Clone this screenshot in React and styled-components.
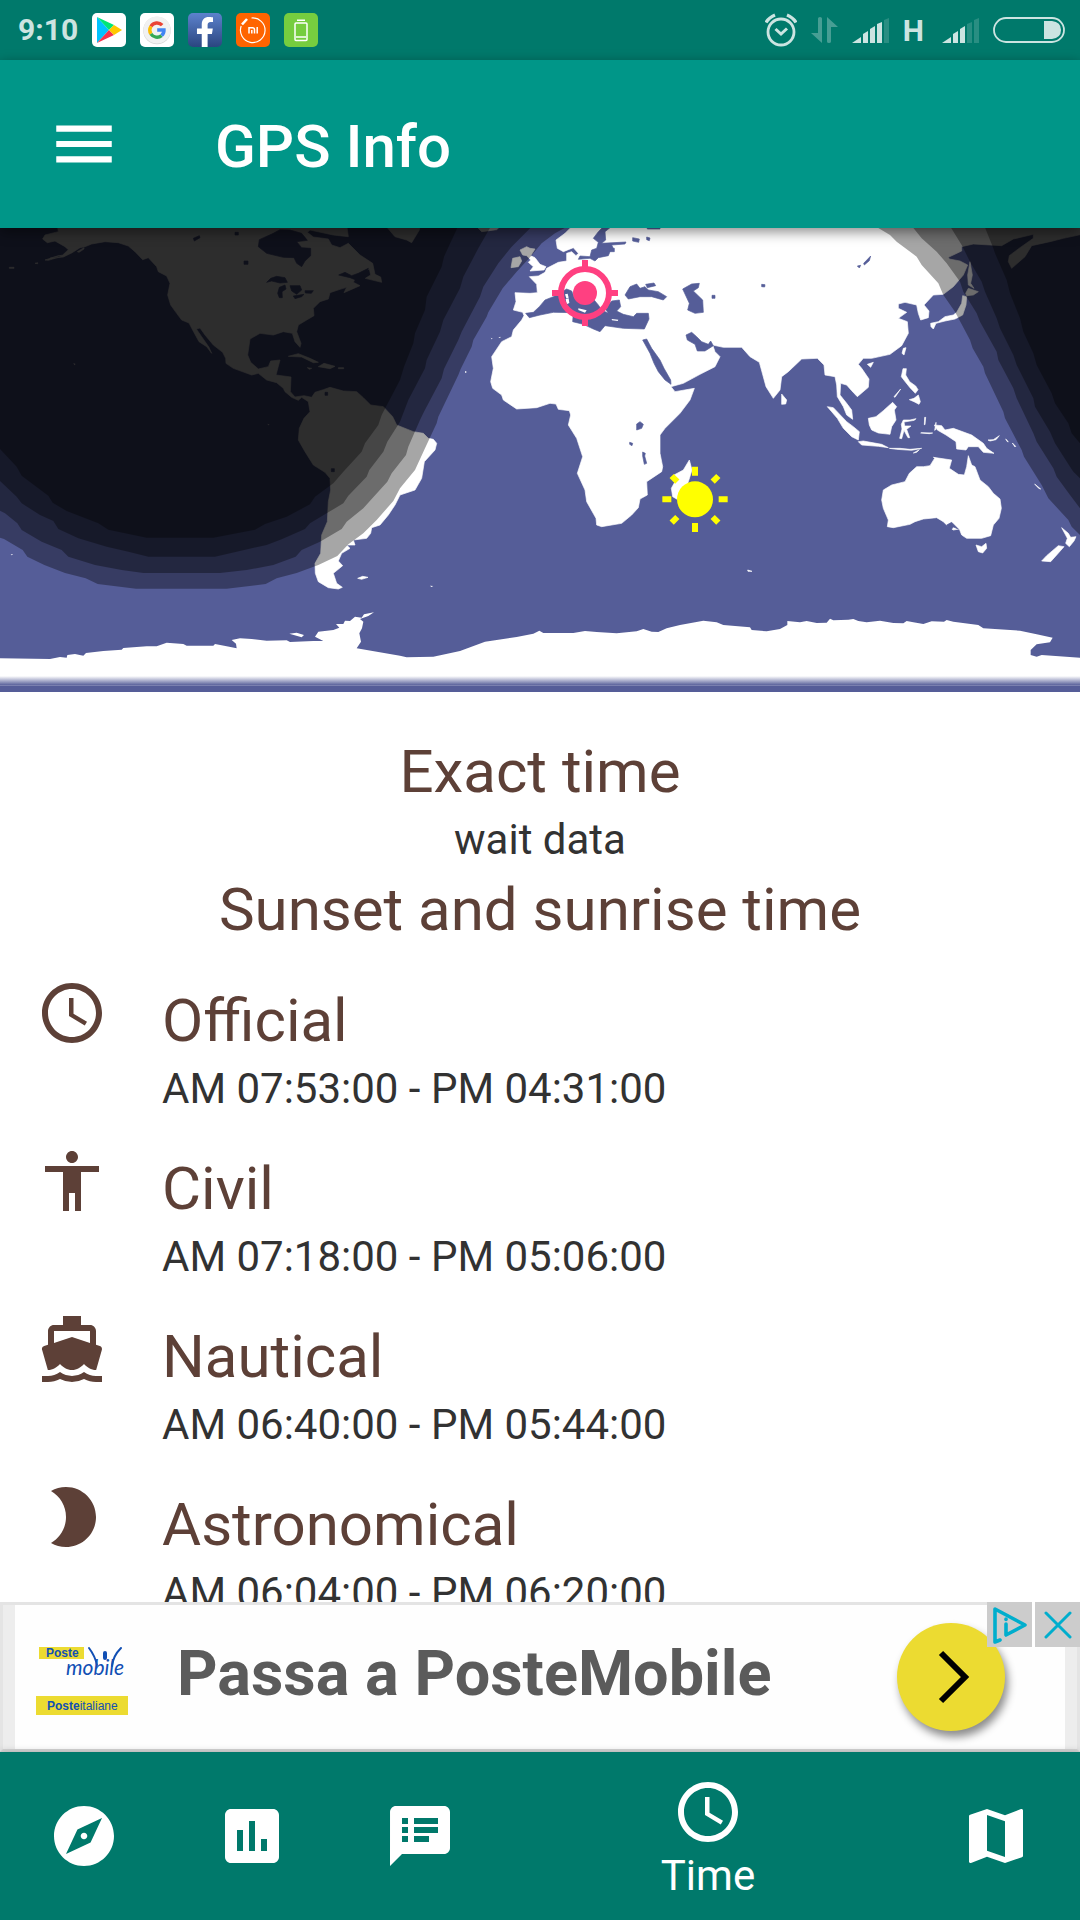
import React from "react";
import styled, { createGlobalStyle } from "styled-components";
import {
  MdMenu,
  MdAccessTime,
  MdAccessibility,
  MdDirectionsBoat,
  MdBrightness2,
  MdExplore,
  MdInsertChart,
  MdSpeakerNotes,
  MdMap,
} from "react-icons/md";
import { FaFacebookF } from "react-icons/fa";

const color = {
  primary: "#009688",
  primaryDark: "#00796b",
  heading: "#5d4037",
  text: "#323232",
  ocean: "#555d98",
  status: "#cce4e1",
  accent: "#ff4081",
  poste: "#ecdb31",
  posteBlue: "#114fb4",
};

const GlobalStyle = createGlobalStyle`
  *, *::before, *::after { box-sizing: border-box; }
  body {
    margin: 0;
    font-family: Roboto, "Noto Sans", sans-serif;
    background: #fff;
  }
  h1, h2, h3, p, ul { margin: 0; padding: 0; }
  ul { list-style: none; }
  button { border: 0; padding: 0; background: none; font: inherit; cursor: pointer; }
  svg { display: block; }
`;

const Screen = styled.div`
  display: flex;
  flex-direction: column;
  height: 100vh;
`;

/* ---------- status bar ---------- */

const StatusBar = styled.div`
  display: flex;
  align-items: center;
  justify-content: space-between;
  flex: none;
  height: 60px;
  padding: 0 15px 0 18px;
  background: ${color.primaryDark};
  color: ${color.status};
`;

const StatusGroup = styled.div`
  display: flex;
  align-items: center;
  gap: ${(p) => p.$gap}px;
`;

const StatusText = styled.span`
  font-size: 30px;
  line-height: 36px;
  font-weight: 700;
`;

const Network = styled(StatusText)`
  margin: 2px 4px 0 0;
`;

const AppBadge = styled.span`
  display: flex;
  align-items: center;
  justify-content: center;
  width: 34px;
  height: 34px;
  border-radius: 5px;
  overflow: hidden;
  background: ${(p) => p.$bg};
  color: #fff;
`;

const FacebookBadge = styled(AppBadge)`
  align-items: flex-end;
  justify-content: flex-end;
  padding-right: 2px;
`;

const PlayLogo = () => (
  <svg width="34" height="34" viewBox="0 0 34 34">
    <path d="M5 4v26L17 17z" fill="#00c3ff" />
    <path d="M5 4 22 12 17 17z" fill="#00e676" />
    <path d="M5 30 22 22 17 17z" fill="#f5334b" />
    <path d="M22 12 30 17 22 22 17 17z" fill="#ffc800" />
  </svg>
);

const GoogleLogo = () => (
  <svg width="34" height="34" viewBox="0 0 34 34" fill="none" strokeWidth="3.400">
    <circle cx="17" cy="17.500" r="13.800" fill="#d5d5d5" />
    <circle cx="17" cy="17" r="13.600" fill="#f1f1f1" />
    <path d="M22.200 12.200A7.200 7.200 0 0 0 10.900 13.300" stroke="#ea4335" />
    <path d="M10.900 13.300A7.200 7.200 0 0 0 10.900 20.900" stroke="#fbbc05" />
    <path d="M10.900 20.900A7.200 7.200 0 0 0 21.600 22.600" stroke="#34a853" />
    <path d="M21.600 22.600A7.200 7.200 0 0 0 24 17H17.200" stroke="#4285f4" />
  </svg>
);

const MiLogo = () => (
  <svg width="34" height="34" viewBox="0 0 34 34" fill="none" stroke="#fff">
    <path d="M15.500 5a12.300 12.300 0 1 1-10.300 8" strokeWidth="1.200" />
    <path d="M6 11.500 11 6" strokeWidth="2.600" />
    <path d="M13 20.500v-5.700h3.500q2 0 2 2v3.700M15.800 20.500v-3.500M21.200 14v6.500" strokeWidth="1.500" />
  </svg>
);

const BatteryAppLogo = () => (
  <svg width="34" height="34" viewBox="0 0 34 34" fill="none" stroke="#fff" strokeWidth="1.500">
    <rect x="11" y="10" width="12" height="17.500" rx="1" />
    <path d="M13 7.200h8M12 24h10" />
  </svg>
);

const AlarmIcon = () => (
  <svg width="32" height="34" viewBox="0 0 32 34" fill="none" stroke="currentColor" strokeWidth="2.800">
    <circle cx="16" cy="19" r="13" />
    <path d="M10.500 16l5.500 5 6-5.500" strokeWidth="3" />
    <path d="M1 9.500Q4 4.500 10 2M31 9.500Q28 4.500 22 2" strokeWidth="3.400" />
  </svg>
);

const DataIcon = () => (
  <svg width="27" height="26" viewBox="0 0 27 26" fill="currentColor" opacity="0.35">
    <path d="M7 1.500Q7 0 9 0t2 1.500V26L0 16h7zM16 0 27 10h-7v14.500q0 1.500-2 1.500t-2-1.500z" />
  </svg>
);

const signalShapes = [
  "0,25 9,19 9,25",
  "11,16 16,13 16,25 11,25",
  "18,11 23,8 23,25 18,25",
  "25,6 30,4 30,25 25,25",
  "32,2 37,0 37,25 32,25",
];

const SignalIcon = ({ level }) => (
  <svg width="37" height="25" viewBox="0 0 37 25" fill="currentColor">
    {signalShapes.map((points, i) => (
      <polygon key={points} points={points} opacity={i < level ? 1 : 0.2} />
    ))}
  </svg>
);

const BatteryIcon = () => (
  <svg width="72" height="26" viewBox="0 0 72 26">
    <rect x="1" y="1" width="70" height="24" rx="12" fill="none" stroke="currentColor" strokeWidth="1.800" />
    <path d="M51 4h8q9 1 9 9t-9 9h-8z" fill="currentColor" />
  </svg>
);

/* ---------- app bar ---------- */

const AppBar = styled.header`
  display: flex;
  align-items: center;
  flex: none;
  gap: 94px;
  height: 168px;
  padding: 0 47px;
  background: ${color.primary};
  color: #fff;
  z-index: 1;
  box-shadow: 0 4px 12px rgba(0, 0, 0, 0.45);
`;

const IconButton = styled.button`
  display: flex;
  color: inherit;
  font-size: 74px;
`;

const Title = styled.h1`
  padding-top: 5px;
  font-size: 60px;
  line-height: 72px;
  font-weight: 500;
`;

/* ---------- content ---------- */

const Content = styled.main`
  flex: 1;
  min-height: 0;
  overflow-y: auto;
  scrollbar-width: none;
`;

const MapFigure = styled.svg`
  width: 100%;
  height: auto;
`;

const Summary = styled.section`
  padding-top: 40px;
  text-align: center;
`;

const Heading = styled.h2`
  font-size: 60px;
  line-height: 80px;
  font-weight: 400;
  color: ${color.heading};
`;

const Value = styled.p`
  padding-bottom: 2px;
  font-size: 42px;
  line-height: 56px;
  color: ${color.text};
`;

const Twilights = styled.ul`
  display: flex;
  flex-direction: column;
  gap: 26px;
  padding: 27px 36px;
`;

const Twilight = styled.li`
  display: flex;
  align-items: flex-start;
  gap: 54px;
  color: ${color.heading};

  > svg {
    flex: none;
    font-size: 72px;
  }
`;

const TwilightBody = styled.div`
  padding-top: 4px;
`;

/* ---------- advert ---------- */

const Advert = styled.aside`
  position: relative;
  display: flex;
  align-items: center;
  flex: none;
  height: 150px;
  padding: 0 60px 0 21px;
  background: #fefefe;
  border: 3px solid #e4e4e4;
  border-bottom-color: #d5d5d5;
  box-shadow: inset 12px 0 #ededed, inset -12px 0 #ededed;
`;

const Brand = styled.svg`
  flex: none;
  margin-left: 12px;
`;

const AdLink = styled.a`
  flex: 1;
  padding: 0 0 6px 49px;
  font-size: 63px;
  line-height: 74px;
  font-weight: 700;
  color: #5b5b5b;
  text-decoration: none;
`;

const GoButton = styled.button`
  display: flex;
  align-items: center;
  justify-content: center;
  flex: none;
  width: 108px;
  height: 108px;
  margin-right: 12px;
  padding-left: 6px;
  border-radius: 50%;
  background: ${color.poste};
  box-shadow: 3px 6px 8px rgba(0, 0, 0, 0.45);
`;

const AdControls = styled.div`
  position: absolute;
  top: -3px;
  right: -3px;
  display: flex;
  gap: 3px;
  background: #fff;
`;

const AdControl = styled.button`
  display: flex;
  align-items: center;
  justify-content: center;
  width: 45px;
  height: 45px;
  background: #ccc;
  color: #00aecd;
`;

/* ---------- bottom navigation ---------- */

const BottomNav = styled.nav`
  display: flex;
  flex: none;
  height: 168px;
  background: ${color.primaryDark};
  z-index: 1;
  box-shadow: 0 0 8px rgba(0, 0, 0, 0.2);
`;

const NavItem = styled.button`
  display: flex;
  flex-direction: column;
  align-items: center;
  justify-content: ${(p) => (p.$active ? "flex-start" : "center")};
  gap: 2px;
  flex: ${(p) => (p.$active ? "1" : "0 0 168px")};
  padding-top: ${(p) => (p.$active ? 24 : 0)}px;
  color: #fff;
  font-size: 42px;
  line-height: 52px;

  > svg {
    font-size: 72px;
  }
`;

/* ---------- world map drawing ---------- */

/* Everything that lies in the western third of the map. */
const westLand = [
  // North and South America
  "M172 0 175 20 135 30 128 42 142 53 165 48 195 65 205 74 188 90 150 100 190 96 215 84 240 68 255 65 275 57 315 50 355 53 385 63 405 80 428 104 445 98 470 125 475 140 500 153 510 175 503 210 512 240 530 265 545 285 567 294 578 315 597 350 620 365 635 385 627 367 605 335 589 312 600 309 615 330 640 360 668 382 677 400 678 415 700 430 755 450 775 445 800 465 830 473 850 490 855 500 875 517 895 526 905 517 925 530 930 560 912 580 898 610 895 645 915 680 940 720 975 742 990 760 992 795 985 830 982 890 965 930 962 985 945 1015 946 1045 955 1070 985 1088 1015 1092 1027 1087 1010 1075 1000 1045 1028 1022 1015 1008 1025 985 1050 970 1040 960 1065 960 1060 945 1100 940 1112 925 1115 908 1140 900 1165 870 1185 840 1200 810 1245 795 1265 760 1273 710 1305 675 1310 655 1300 643 1285 640 1270 625 1240 620 1190 600 1178 575 1150 545 1112 540 1090 518 1070 500 1030 498 990 487 970 494 945 502 935 517 912 512 885 516 871 500 873 456 828 450 840 405 812 408 805 425 775 432 752 412 743 390 750 342 780 325 820 330 850 320 877 325 885 350 900 367 903 355 890 320 895 300 920 285 942 272 940 250 960 230 985 222 990 203 1020 193 1040 187 1032 203 1080 182 1060 172 1068 155 1108 132 1112 150 1096 160 1145 172 1142 156 1125 148 1118 115 1080 90 1045 55 1020 68 995 60 985 42 940 36 922 22 930 15 1000 30 1045 35 1040 0z",
  // Cuba, Hispaniola, Jamaica, Puerto Rico
  "M865 394 895 386 930 400 955 412 940 413 905 396z",
  "M955 425 972 415 1005 424 990 431z",
  "M922 428 935 430 928 433zM1015 428h16v3h-16z",
  // Greenland and Iceland
  "M1155 0 1185 35 1220 45 1235 53 1258 15 1260 0z",
  "M1425 0 1445 20 1490 14 1505 0z",
  // Falklands, South Georgia, Hawaii, Aleutians
  "M1073 1060 1088 1054 1104 1057 1085 1063z",
  "M28 127h14v3H28zM105 115l8-2v3zM135 105l40-13 10 2-40 12zM232 80l20-12v4l-15 10z",
];

const faintIslands = "M1290 1082l10 1-6 3zM220 414l7 3-4 4zM802 596l7 3-4 2zM32 987l8 2-5 2zM1395 439h4v4h-4zM1472 338l6 3-3 2zM1495 338l6-3v4z";

const westSea = [
  "M870 15 840 14 820 25 778 44 775 65 800 85 850 97 882 98 890 115 905 125 915 108 932 92 932 70 905 68 890 50 922 46 905 25z",
  "M800 172 812 160 830 154 855 158 862 172 840 174 815 168z",
  "M855 180 858 192 846 200 847 218 838 218 833 205 838 187z",
  "M870 182 900 182 905 195 890 208 875 198zM880 213 912 208 905 215 885 221zM915 197h25l-6 8-18-1z",
  "M580 40 598 32 600 38 583 48zM705 22h10v8h-10zM732 108h12v10h-12zM975 502h8v9h-8zM994 731h9v9h-9z",
  "M1016 150 1035 142 1055 152 1075 145 1105 130 1098 150 1068 165 1050 158z",
];

/* Europe, Africa and Asia; coordinates start at the mid-Atlantic. */
const eastLand = [
  "M820 0 795 25 768 45 772 70 790 80 820 68 835 85 828 92 815 80 800 85 800 108 775 112 740 130 735 142 715 153 688 155 710 178 712 203 690 205 645 203 648 230 640 255 668 262 672 272 665 285 640 315 635 335 605 350 575 395 580 430 572 470 578 490 605 510 610 525 650 552 710 548 750 535 768 537 775 553 808 557 812 570 805 600 830 640 848 695 832 745 855 795 860 830 888 880 890 900 905 905 965 895 995 870 1015 848 1020 822 1042 810 1040 770 1085 740 1088 725 1080 685 1080 630 1095 610 1140 565 1170 525 1183 490 1125 500 1113 485 1150 475 1200 448 1245 425 1260 395 1245 380 1238 360 1270 367 1325 367 1350 395 1378 412 1398 485 1420 520 1440 495 1445 455 1465 440 1505 402 1552 400 1572 420 1575 450 1605 455 1610 480 1612 515 1630 545 1640 570 1658 583 1655 555 1640 535 1620 510 1622 475 1640 480 1655 497 1672 515 1705 487 1707 462 1685 430 1675 418 1690 400 1715 400 1770 388 1805 362 1825 325 1822 290 1795 280 1820 262 1795 250 1795 237 1815 232 1850 240 1855 265 1862 285 1885 278 1887 258 1872 240 1900 210 1930 208 1960 185 1990 150 2003 120 1980 108 1948 102 1945 97 1985 78 1985 65 2020 57 2105 62 2140 42 2200 28 2200 40 2160 68 2128 92 2125 110 2135 130 2175 95 2195 62 2250 50 2290 40 2345 28 2345 0z",
  // Great Britain and Ireland
  "M660 75 680 65 690 70 705 72 692 92 705 98 720 118 738 125 732 135 690 138 700 125 685 112 692 105 680 92 668 90z",
  "M638 100 660 95 665 108 655 125 633 128z",
  // Madagascar
  "M1168 705 1176 735 1165 770 1150 815 1135 825 1118 815 1114 790 1125 770 1122 750 1150 735z",
  // Sri Lanka
  "M1445 507 1460 525 1457 537 1445 538z",
  // Sumatra, Java and the lesser Sunda islands
  "M1582 545 1600 548 1640 590 1660 605 1678 620 1675 645 1655 635 1630 610 1612 580 1595 560z",
  "M1675 650 1690 648 1745 658 1765 668 1735 664 1685 660z",
  "M1768 670 1800 670 1830 673 1865 670 1835 676 1790 673zM1840 684 1858 674 1850 682z",
  // Borneo
  "M1705 580 1728 575 1750 557 1778 532 1790 545 1783 555 1788 585 1775 605 1770 628 1735 624 1715 615 1708 600z",
  // Sulawesi
  "M1804 598 1810 585 1830 585 1848 581 1843 586 1812 591 1814 603 1833 603 1820 613 1829 638 1824 638 1812 616 1805 641 1799 640 1806 612z",
  // Moluccas
  "M1874 577h3l-2 22h-2zM1864 623l34 1-10 2-26-2zM1908 592l-4 24 3-2z",
  // Philippines
  "M1809 431 1819 431 1817 450 1829 470 1847 483 1854 494 1846 505 1830 488 1814 468 1804 455zM1842 520 1855 510 1861 530 1857 538 1842 530 1828 524zM1782 515l20-23-17 25z",
  // Taiwan and Hainan
  "M1818 368 1812 390 1806 385 1810 370zM1702 418 1720 412 1712 427z",
  // Japan and Sakhalin
  "M1892 295 1915 290 1935 275 1960 270 1970 262 1985 235 1988 212 2000 215 1998 240 1988 270 1965 282 1935 288 1908 295 1900 312 1893 305z",
  "M1997 205 2005 190 2035 200 2020 210 2000 212zM2010 110 2017 150 2012 175 2022 190 2005 180 2003 150z",
  // New Guinea and the islands east of it
  "M1903 600 1925 602 1935 615 1960 610 2015 630 2050 655 2060 670 2082 685 2050 682 2035 665 2005 665 1998 675 1970 672 1968 650 1938 630 1912 615z",
  "M2064 645 2080 644 2098 632 2088 644 2070 648zM2117 642l8 8-3 0zM2137 654l10 10-2 2zM2204 777l18 15-6-2z",
  // Australia and Tasmania
  "M2005 692 2015 720 2025 725 2040 765 2065 785 2080 805 2100 822 2104 850 2097 880 2080 900 2072 932 2045 940 2000 940 1985 930 1978 912 1960 915 1945 905 1930 890 1910 878 1870 882 1845 890 1830 898 1780 908 1762 905 1765 885 1750 850 1745 825 1750 795 1775 780 1815 770 1828 745 1850 725 1870 725 1890 722 1905 698 1900 697 1955 705 1948 730 1975 748 1993 750 2000 725z",
  "M2028 960 2045 965 2058 955 2060 970 2048 984 2035 980z",
  // New Zealand
  "M2285 908 2305 925 2312 937 2328 935 2322 948 2308 965 2297 955 2302 940z",
  "M2275 962 2292 965 2270 990 2252 1010 2225 1008 2240 992z",
  // Kerguelen
  "M1343 1035l13 4-12 0z",
];

const eastSea = [
  // Mediterranean with the Adriatic and Aegean
  "M677 265 700 262 718 245 735 225 760 215 778 205 800 192 815 198 822 215 845 235 858 240 850 222 835 200 845 195 880 222 895 240 905 255 925 265 915 250 935 228 958 225 962 245 950 258 970 268 1000 275 1010 265 1045 265 1047 282 1033 312 970 310 915 302 900 320 880 312 850 298 818 290 820 263 760 262 720 270 688 278z",
  // Black Sea and Azov
  "M975 210 990 185 1010 177 1020 190 1035 185 1045 195 1075 200 1100 215 1090 225 1055 215 1020 215 985 222zM1037 178l25-4 5 8-25 6z",
  // Caspian, Aral and Lake Balkhash
  "M1148 192 1175 177 1198 175 1195 188 1180 198 1208 225 1210 262 1185 265 1163 255 1168 235z",
  "M1236 211h9v9h-9zM1385 178l10 1-1 7-9-1z",
  // Baikal
  "M1712 93l-4 14-15 13-2-5zM1672 123l10-2-4 8z",
  // Baltic with the Gulf of Finland
  "M880 40 895 20 915 0 940 0 915 20 917 45 905 55 978 51 975 57 935 60 940 70 930 80 925 92 895 98 885 108 870 100 835 103 840 93 870 95 875 75 890 70 895 52z",
  "M928 70h15v10h-12zM998 38l20 4-2 10-18-4zM1040 36l10 3-2 8-8-3zM1040 0h40v12l-38 0z",
  // Red Sea
  "M1028 345 1040 342 1055 370 1080 405 1092 430 1112 465 1113 478 1095 465 1075 440 1062 415 1050 385z",
  // Persian Gulf
  "M1158 330 1175 322 1190 335 1205 350 1225 358 1232 348 1240 362 1215 378 1192 378 1185 358 1162 345z",
  // African lakes
  "M1010 597 1020 590 1030 598 1025 610 1010 615zM989 652l9 3-2 7-7-4zM1028 681l8 4-2 8 6 22-7 3-5-25z",
  // Spencer Gulf
  "M1940 900l15-8 20 20-15-6-10 12z",
];

const medIslands = "M795 208l8-2 3 12-7 2zM797 222l9-2 2 14-8 4zM835 250l25 6-5 7-20-8zM935 282l20 2-2 4-17-2z";

const antarctica =
  "M0 1300 150 1302 180 1296 200 1298 202 1290 225 1287 250 1292 258 1284 310 1278 365 1274 370 1269 440 1264 470 1264 500 1253 550 1257 560 1262 640 1262 645 1257 680 1264 710 1270 708 1256 695 1245 720 1240 755 1242 800 1247 860 1246 870 1251 940 1248 970 1248 945 1235 955 1220 1000 1215 1018 1208 1008 1197 1030 1197 1035 1187 1050 1188 1065 1175 1085 1178 1092 1168 1122 1162 1105 1173 1080 1182 1090 1190 1086 1210 1078 1225 1083 1250 1070 1270 1200 1292 1220 1297 1300 1295 1380 1278 1455 1250 1550 1236 1600 1226 1618 1217 1630 1224 1720 1224 1755 1218 1790 1221 1850 1225 1910 1219 1930 1212 1955 1220 1975 1221 2000 1210 2040 1200 2110 1187 2150 1192 2170 1200 2250 1207 2255 1215 2300 1219 2340 1212 2362 1200 2362 1188 2400 1192 2420 1188 2450 1194 2480 1193 2490 1181 2500 1186 2545 1184 2560 1182 2575 1188 2600 1192 2640 1187 2680 1194 2710 1195 2720 1188 2740 1192 2770 1197 2795 1189 2832 1190 2840 1185 2860 1190 2935 1200 2950 1210 3060 1217 3110 1228 3158 1238 3150 1252 3110 1258 3092 1275 3092 1290 3110 1295 3125 1290 3240 1298V1390H0z M868 1226 890 1223 912 1230 905 1237z";

/* Twilight limits: official, civil, nautical, astronomical. */
const nightWest = [
  "M0 0V938L12 942 68 975 82 995 133 1020 195 1044 257 1060 293 1077 408 1091H680L797 1077 830 1060 890 1044 955 1020 1012 993 1045 958 1090 925 1130 885 1180 828 1200 790 1245 735 1275 670 1310 595 1315 575 1375 450 1382 432 1415 365 1420 345 1460 275 1465 262 1508 190 1550 140 1590 97 1625 55 1665 25 1710 0z",
  "M0 0V857L15 865 52 895 65 915 125 950 185 975 205 995 285 1020 365 1035 430 1044H660L740 1035 820 1020 887 995 905 975 960 950 1025 912 1040 890 1090 850 1115 822 1162 770 1175 745 1218 690 1225 665 1260 585 1272 560 1325 460 1332 432 1375 345 1385 320 1440 215 1450 185 1495 115 1535 65 1600 0z",
  "M0 0V768L50 815 65 835 120 870 160 888 175 912 235 940 320 965 385 980 445 995H645L710 980 800 960 845 943 915 912 930 895 985 862 1030 835 1045 812 1100 755 1108 735 1150 680 1162 650 1200 590 1225 525 1275 430 1280 405 1320 320 1330 285 1380 190 1390 155 1435 70 1475 0z",
  "M0 0V672L50 725 65 752 145 812 158 833 200 858 295 895 325 914 440 938H640L765 914 795 897 860 875 930 838 945 815 1000 775 1030 740 1085 680 1095 655 1135 600 1145 570 1200 465 1212 425 1240 355 1245 325 1275 255 1280 215 1325 125 1332 95 1376 0z",
];

const nightEast = [
  "M2620 0 2670 30 2690 50 2750 95 2765 120 2815 175 2830 210 2865 260 2910 345 2918 370 2950 425 2955 445 3010 560 3015 580 3065 675 3072 695 3125 780 3145 820 3205 885 3215 905 3240 930V0z",
  "M2733 0 2765 40 2810 80 2840 115 2880 170 2890 200 2930 265 2940 290 2990 380 2995 405 3040 490 3050 520 3100 625 3110 650 3160 730 3170 755 3210 810 3240 850V0z",
  "M2848 0 2885 60 2910 110 2945 170 2955 200 2990 280 3000 310 3040 390 3050 420 3100 520 3105 545 3150 620 3165 655 3210 725 3220 740 3240 760V0z",
  "M2952 0 2980 70 2985 85 3020 165 3030 205 3060 280 3070 320 3100 385 3110 420 3155 505 3165 535 3205 595 3215 625 3240 655V0z",
];

const WorldMap = () => (
  <MapFigure viewBox="0 9 3240 1392" role="img" aria-label="Day and night map">
    <defs>
      <linearGradient id="southFade" x1="0" y1="0" x2="0" y2="1">
        <stop offset="0" stopColor={color.ocean} stopOpacity="0" />
        <stop offset="1" stopColor={color.ocean} />
      </linearGradient>
    </defs>
    <rect width="3240" height="1410" fill={color.ocean} />
    <path d={antarctica} fill="#fff" />
    <rect y="1353" width="3240" height="28" fill="url(#southFade)" />
    <rect y="1381" width="3240" height="30" fill={color.ocean} />
    <g strokeLinejoin="round" strokeWidth="2">
      <path d={westLand.join("")} fill="#fff" stroke="#fff" />
      <path d={faintIslands} fill="#fff" />
      <path d={westSea.join("")} fill={color.ocean} stroke={color.ocean} />
      <g transform="translate(900 0)">
        <path d={eastLand.join("")} fill="#fff" stroke="#fff" />
        <path d={eastSea.join("")} fill={color.ocean} stroke={color.ocean} />
        <path d={medIslands} fill="#fff" />
      </g>
    </g>
    <g fillOpacity="0.35">
      {[...nightWest, ...nightEast].map((d) => (
        <path key={d} d={d} />
      ))}
    </g>
    <g transform="translate(1755 204)" fill="none" stroke={color.accent} strokeWidth="18">
      <circle r="72" />
      <circle r="36" fill={color.accent} stroke="none" />
      <path d="M0-99v24M0 75v24M-99 0h24M75 0h24" />
    </g>
    <g transform="translate(2085 823)" fill="#ff0" stroke="#ff0" strokeWidth="18">
      <circle r="54" stroke="none" />
      <path d="M0-98v27M0 71v27M-98 0h27M71 0h27M-70-70l17 17M53 53l17 17M-70 70l17-17M53-53l17-17" />
    </g>
  </MapFigure>
);

const PosteLogo = () => (
  <Brand width="92" height="76" viewBox="0 0 92 76" fill={color.posteBlue} fontFamily="'Liberation Sans', Arial, sans-serif">
    <rect x="3" y="8" width="45" height="12" fill={color.poste} />
    <text x="10" y="18" fontSize="12" fontWeight="700">Poste</text>
    <text x="30" y="36" fontSize="21" fontStyle="italic" fontFamily="Lato, sans-serif">mobile</text>
    <g fill="none" stroke={color.posteBlue} strokeLinecap="round">
      <path d="M53 9q6 8 8 17M85 9q-8 8-9 18" strokeWidth="2" />
      <path d="M69 14v5" strokeWidth="4" />
    </g>
    <rect y="57" width="92" height="19" fill={color.poste} />
    <text x="11" y="71" fontSize="12"><tspan fontWeight="700">Poste</tspan>italiane</text>
  </Brand>
);

const twilights = [
  { name: "Official", time: "AM 07:53:00 - PM 04:31:00", Icon: MdAccessTime },
  { name: "Civil", time: "AM 07:18:00 - PM 05:06:00", Icon: MdAccessibility },
  { name: "Nautical", time: "AM 06:40:00 - PM 05:44:00", Icon: MdDirectionsBoat },
  { name: "Astronomical", time: "AM 06:04:00 - PM 06:20:00", Icon: MdBrightness2 },
];

const tabs = [
  { name: "Compass", Icon: MdExplore },
  { name: "Signal", Icon: MdInsertChart },
  { name: "Messages", Icon: MdSpeakerNotes },
  { name: "Time", Icon: MdAccessTime, active: true },
  { name: "Map", Icon: MdMap },
];

export default function App() {
  return (
    <Screen>
      <GlobalStyle />
      <StatusBar>
        <StatusGroup $gap={14}>
          <StatusText>9:10</StatusText>
          <AppBadge $bg="#fff"><PlayLogo /></AppBadge>
          <AppBadge $bg="#fff"><GoogleLogo /></AppBadge>
          <FacebookBadge $bg="linear-gradient(#5c82cd, #2b4680)"><FaFacebookF size={30} /></FacebookBadge>
          <AppBadge $bg="#ff6400"><MiLogo /></AppBadge>
          <AppBadge $bg="#76cd3f"><BatteryAppLogo /></AppBadge>
        </StatusGroup>
        <StatusGroup $gap={14}>
          <AlarmIcon />
          <DataIcon />
          <SignalIcon level={4} />
          <Network>H</Network>
          <SignalIcon level={3} />
          <BatteryIcon />
        </StatusGroup>
      </StatusBar>

      <AppBar>
        <IconButton type="button" aria-label="Menu"><MdMenu /></IconButton>
        <Title>GPS Info</Title>
      </AppBar>

      <Content>
        <WorldMap />
        <Summary>
          <Heading>Exact time</Heading>
          <Value>wait data</Value>
          <Heading>Sunset and sunrise time</Heading>
        </Summary>
        <Twilights>
          {twilights.map(({ name, time, Icon }) => (
            <Twilight key={name}>
              <Icon />
              <TwilightBody>
                <Heading as="h3">{name}</Heading>
                <Value>{time}</Value>
              </TwilightBody>
            </Twilight>
          ))}
        </Twilights>
      </Content>

      <Advert>
        <PosteLogo />
        <AdLink href="#poste">Passa a PosteMobile</AdLink>
        <GoButton type="button" aria-label="Open">
          <svg width="32" height="54" viewBox="0 0 32 54" fill="none" stroke="#000" strokeWidth="6">
            <path d="M3 3l24 24L3 51" />
          </svg>
        </GoButton>
        <AdControls>
          <AdControl type="button" aria-label="Ad choices">
            <svg width="36" height="38" viewBox="0 0 36 38" fill="none" stroke="currentColor" strokeWidth="3.600" strokeLinejoin="round" strokeLinecap="round">
              <path d="M8 34l-5 2V3l30 16-19 10V18" />
              <path d="M14 13v0.500" />
            </svg>
          </AdControl>
          <AdControl type="button" aria-label="Close ad">
            <svg width="28" height="28" viewBox="0 0 28 28" fill="none" stroke="currentColor" strokeWidth="3" strokeLinecap="round">
              <path d="M2 2l24 24M26 2L2 26" />
            </svg>
          </AdControl>
        </AdControls>
      </Advert>

      <BottomNav>
        {tabs.map(({ name, Icon, active }) => (
          <NavItem key={name} type="button" $active={active} aria-label={name}>
            <Icon />
            {active && <span>{name}</span>}
          </NavItem>
        ))}
      </BottomNav>
    </Screen>
  );
}
